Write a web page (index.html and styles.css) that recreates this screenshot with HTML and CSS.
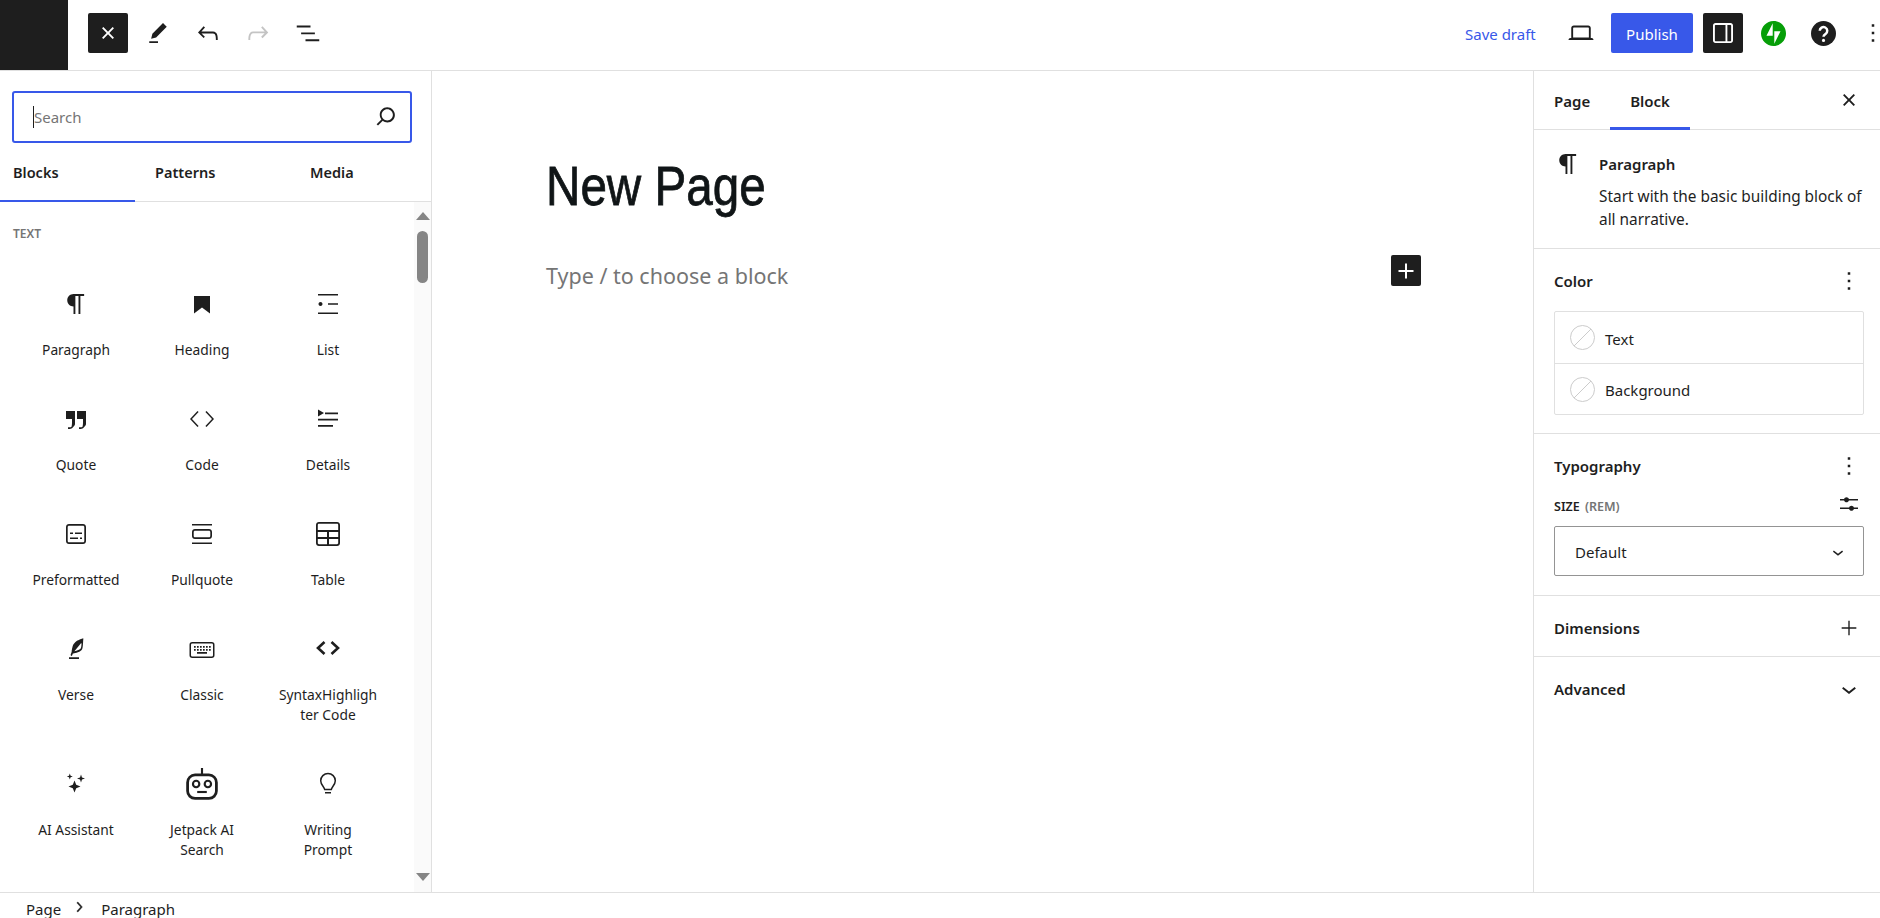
FILE: index.html
```html
<!DOCTYPE html>
<html lang="en">
<head>
    <meta charset="UTF-8">
    <title>Add New Page</title>
    <link rel="stylesheet" href="styles.css">
</head>
<body>
<div class="app">

    <!-- top toolbar -->
    <header class="topbar">
        <div class="logo-box"></div>
        <button class="icon-btn dark">
            <svg viewBox="0 0 24 24" width="30" height="30"><path d="M12 13.06l3.712 3.713 1.061-1.06L13.061 12l3.712-3.712-1.06-1.06L12 10.938 8.288 7.227l-1.061 1.06L10.939 12l-3.712 3.712 1.06 1.061L12 13.061z"/></svg>
        </button>
        <button class="tool-btn first-tool"><svg viewBox="0 0 24 24" width="30" height="30"><path d="m19 7-3-3-8.5 8.5-1 4 4-1L19 7Zm-7 11.5H5V20h7v-1.5Z"/></svg></button>
        <button class="tool-btn"><svg viewBox="0 0 24 24" width="30" height="30"><path d="M18.3 11.7c-.6-.6-1.4-.9-2.3-.9H6.7l2.9-3.3-1.1-1-4.5 5L8.5 16l1-1-2.7-2.7H16c.5 0 .9.2 1.3.5 1 1 1 3.4 1 4.5v.3h1.5v-.2c0-1.5 0-4.3-1.5-5.7z"/></svg></button>
        <button class="tool-btn disabled"><svg viewBox="0 0 24 24" width="30" height="30"><path d="M15.6 6.5l-1.1 1 2.9 3.3H8c-.9 0-1.7.3-2.3.9-1.4 1.5-1.4 4.2-1.4 5.6v.2h1.5v-.3c0-1.1 0-3.5 1-4.5.3-.3.7-.5 1.3-.5h9.2L14.5 15l1.1 1.1 4.6-4.6-4.6-5z"/></svg></button>
        <button class="tool-btn"><svg viewBox="0 0 24 24" width="30" height="30"><path d="M3 6h11v1.5H3V6Zm3.5 5.5h11V13h-11v-1.5ZM21 17H10v1.5h11V17Z"/></svg></button>

        <div class="topbar-right">
            <a class="save-draft">Save draft</a>
            <button class="icon-btn laptop"><svg viewBox="0 0 24 24" width="30" height="30"><path d="M20.5 16h-.7V8c0-1.1-.9-2-2-2H6.2c-1.1 0-2 .9-2 2v8h-.7c-.8 0-1.5.7-1.5 1.5h20c0-.8-.7-1.5-1.5-1.5zM5.7 8c0-.3.2-.5.5-.5h11.6c.3 0 .5.2.5.5v7.6H5.7V8z"/></svg></button>
            <button class="publish">Publish</button>
            <button class="icon-btn dark"><svg viewBox="0 0 24 24" width="30" height="30"><path d="M18 4H6c-1.1 0-2 .9-2 2v12c0 1.1.9 2 2 2h12c1.1 0 2-.9 2-2V6c0-1.1-.9-2-2-2zm-4 14.5H6c-.3 0-.5-.2-.5-.5V6c0-.3.2-.5.5-.5h8v13zm4.5-.5c0 .3-.2.5-.5.5h-2.500v-13H18c.3 0 .5.2.5.5v12z"/></svg></button>
            <button class="tool-btn"><svg viewBox="0 0 32 32" width="25" height="25"><path fill="#069e08" d="M16 0C7.2 0 0 7.2 0 16s7.2 16 16 16 16-7.2 16-16S24.8 0 16 0zm-1 19H7l8-16v16zm2 10V13h8l-8 16z"/></svg></button>
            <button class="tool-btn"><svg viewBox="0 0 24 24" width="25" height="25"><circle cx="12" cy="12" r="12"/><path d="M8.4 9.4a3.6 3.6 0 1 1 5.6 3c-1.2.8-2 1.3-2 2.8" fill="none" stroke="#fff" stroke-width="2.4"/><circle cx="12" cy="18.6" r="1.5" fill="#fff"/></svg></button>
            <button class="kebab-top"><svg viewBox="6.4 0 11.2 24" width="14" height="30"><path d="M13 19h-2v-2h2v2zm0-6h-2v-2h2v2zm0-6h-2V5h2v2z"/></svg></button>
        </div>
    </header>

    <div class="main">

        <!-- block inserter -->
        <aside class="inserter">
            <div class="search-wrap">
                <div class="search-box">
                    <span class="caret"></span>
                    <span class="placeholder">Search</span>
                    <svg viewBox="0 0 24 24" width="30" height="30"><path d="M13 5c-3.3 0-6 2.7-6 6 0 1.4.5 2.7 1.3 3.7l-3.8 3.8 1.1 1.1 3.8-3.8c1 .8 2.3 1.3 3.7 1.3 3.3 0 6-2.7 6-6S16.3 5 13 5zm0 10.5c-2.5 0-4.5-2-4.5-4.5s2-4.5 4.5-4.5 4.5 2 4.5 4.5-2 4.5-4.5 4.5z"/></svg>
                </div>
            </div>
            <div class="ins-tabs">
                <div class="ins-tab active">Blocks</div>
                <div class="ins-tab patterns">Patterns</div>
                <div class="ins-tab media">Media</div>
            </div>
            <div class="ins-body">
                <div class="ins-list">
                    <div class="cat-title">TEXT</div>
                    <div class="block-grid">
                        <div class="block-item">
                            <svg viewBox="2.4 2.4 19.2 19.2" width="24" height="24"><path d="m9.996 14v-.225l.004 0v6.225h1.5v-14.5h2.5v14.5h1.5v-14.5h3v-1.5h-8.504c-2.761 0-5 2.239-5 5 0 2.761 2.239 5 5 5z"/></svg>
                            <span>Paragraph</span>
                        </div>
                        <div class="block-item">
                            <svg viewBox="0 0 24 24" width="24" height="24"><path d="M4 4h16v17.5l-8-6-8 6z"/></svg>
                            <span>Heading</span>
                        </div>
                        <div class="block-item">
                            <svg viewBox="0 0 24 24" width="24" height="24"><path d="M2 2v1.5h20V2H2zm10 10.75h10v-1.5H12v1.5zM2 22h20v-1.5H2V22zm4.5-10c0-1.1-.9-2-2-2s-2 .9-2 2 .9 2 2 2 2-.9 2-2z"/></svg>
                            <span>List</span>
                        </div>
                        <div class="block-item">
                            <svg viewBox="0 0 24 24" width="24" height="24"><path d="M13 4v8h6v4c0 .8-.2 3.4-.5 3.7-.6.6-1.6.6-2.5.5h-1v1.8h1c1 0 2.3-.1 3.3-1 .6-.6 2.7-2.6 2.7-3.8V4h-9zM2 4v8h6v4c0 .8-.2 3.4-.5 3.7-.6.6-1.6.6-2.5.5H4v1.8h1c1 0 2.3-.1 3.3-1 .6-.6 2.7-2.6 2.7-3.8V4H2z"/></svg>
                            <span>Quote</span>
                        </div>
                        <div class="block-item">
                            <svg viewBox="0 0 24 24" width="24" height="24"><path d="M16.5 4l-1.1 1.1L22 12l-6.6 6.9 1.1 1.1 7.5-8zM7.500 4l1.100 1.100L2 12l6.600 6.900-1.100 1.100L0 12z"/></svg>
                            <span>Code</span>
                        </div>
                        <div class="block-item">
                            <svg viewBox="0 0 24 24" width="24" height="24"><path d="M2 18h15v1.800H2V18zm0-6.200h20v1.800H2v-1.800zM9 5.500h13v1.800H9V5.500z"/><path d="M2 2.500v7l6-3.500z"/></svg>
                            <span>Details</span>
                        </div>
                        <div class="block-item">
                            <svg viewBox="0 0 24 24" width="24" height="24"><path d="M19 2H5C3.3 2 2 3.3 2 5v14c0 1.7 1.3 3 3 3h14c1.7 0 3-1.3 3-3V5c0-1.7-1.3-3-3-3zm1.3 17c0 .7-.6 1.3-1.3 1.3H5c-.7 0-1.3-.6-1.3-1.3V5c0-.7.6-1.3 1.3-1.3h14c.7 0 1.3.6 1.3 1.3v14zM6 17h8v-1.5H6V17zm5-5h7v-1.5h-7V12zm-2-1.5H6V12h3v-1.5zm7 6.5h2v-1.5h-2V17z"/></svg>
                            <span>Preformatted</span>
                        </div>
                        <div class="block-item">
                            <svg viewBox="0 0 24 24" width="24" height="24"><path d="M19 7H5C3.3 7 2 8.3 2 10v4c0 1.7 1.3 3 3 3h14c1.7 0 3-1.3 3-3v-4c0-1.7-1.3-3-3-3zm1.3 7c0 .7-.6 1.3-1.3 1.3H5c-.7 0-1.3-.6-1.3-1.3v-4c0-.7.6-1.3 1.3-1.3h14c.7 0 1.3.6 1.3 1.3v4zM2 2v1.5h20V2H2zm0 20h20v-1.5H2V22z"/></svg>
                            <span>Pullquote</span>
                        </div>
                        <div class="block-item">
                            <svg viewBox="0 0 24 24" width="24" height="24"><path d="M21 0H3C1.3 0 0 1.3 0 3v18c0 1.7 1.3 3 3 3h18c1.7 0 3-1.3 3-3V3c0-1.7-1.3-3-3-3zM3 1.8h18c.7 0 1.2.5 1.2 1.2v5H1.800V3c0-.7.5-1.200 1.200-1.200zM13 10h9.200v5H13v-5zm-2 5H1.800v-5H11v5zM1.800 21v-4H11v5.200H3c-.7 0-1.200-.5-1.200-1.200zM21 22.200h-8V17h9.200v4c0 .7-.5 1.200-1.200 1.200z"/></svg>
                            <span>Table</span>
                        </div>
                        <div class="block-item">
                            <svg viewBox="0 0 24 24" width="24" height="24"><path d="M19.5 1l-1 .4c-.1 0-4 1.3-5.800 2.600C10.800 5.400 10 6.600 9.500 7.300c-.7 1.100-1.800 5.600-1.800 7.500l-1 2.800c-.2.5 0 .9.4 1.200.1 0 .2.1.3.1.3 0 .7-.2.8-.6l.7-1.800c.3 0 .8-.1 1.300-.2.8-.1 1.500-.4 2.400-.6.9-.2 1.800-.6 2.700-1 .8-.4 1.500-.8 2.100-1.400.6-.6.9-1.400 1.100-2.300.2-.8.3-1.900.4-2.900.1-1 .1-2 .2-3 0-1 .1-1.800.2-2.500V1zm-2 6.600c-.1 1-.2 1.800-.3 2.500-.2.7-.4 1.200-.7 1.600-.3.4-.9.7-1.600 1.100-.8.4-1.600.6-2.500 1-.7.2-1.400.4-2 .5l6.800-8.200c.1.5.4.5.3 1.500zM5 22h10v-1.700H5V22z"/></svg>
                            <span>Verse</span>
                        </div>
                        <div class="block-item">
                            <svg viewBox="0 0 26 24" width="26" height="24" class="down1"><rect x="1.25" y="4.75" width="23.5" height="14.5" rx="2" fill="none" stroke="#1e1e1e" stroke-width="1.5"/><path d="M5 8h1.7v1.7H5zM8 8h1.7v1.7H8zM11 8h1.7v1.7H11zM14 8h1.7v1.7H14zM17 8h1.7v1.7H17zM20 8h1.7v1.7H20zM5 11h1.7v1.7H5zM8 11h1.7v1.7H8zM11 11h1.7v1.7H11zM14 11h1.7v1.7H14zM17 11h1.7v1.7H17zM20 11h1.7v1.7H20zM8 14h10v1.7H8z"/></svg>
                            <span>Classic</span>
                        </div>
                        <div class="block-item">
                            <svg viewBox="0 0 24 24" width="24" height="24" class="up1"><path d="M8.5 6L2 12l6.5 6M15.5 6l6.5 6-6.5 6" fill="none" stroke="#1e1e1e" stroke-width="2.6"/></svg>
                            <span>SyntaxHighligh<br>ter Code</span>
                        </div>
                        <div class="block-item">
                            <svg viewBox="0 0 24 24" width="24" height="24"><path d="M9.5 8.5l1.7 4.3 4.3 1.7-4.3 1.7-1.7 4.3-1.7-4.3-4.3-1.7 4.3-1.7zM16 2.5l1 3 3 1-3 1-1 3-1-3-3-1 3-1zM4.8 1.5l.8 2.2 2.2.8-2.2.8-.8 2.2L4 5.3l-2.2-.8L4 3.7z" transform="translate(1 0)"/></svg>
                            <span>AI Assistant</span>
                        </div>
                        <div class="block-item">
                            <svg viewBox="0 0 30 30" width="32" height="32" class="robot"><path d="M14 0h2v6h-2z"/><rect x="1.5" y="6.5" width="27" height="22" rx="7" fill="none" stroke="#1e1e1e" stroke-width="2.6"/><circle cx="9.5" cy="15" r="3" fill="none" stroke="#1e1e1e" stroke-width="2"/><circle cx="20.5" cy="15" r="3" fill="none" stroke="#1e1e1e" stroke-width="2"/><path d="M10.5 21.5h9v2h-9z"/></svg>
                            <span>Jetpack AI<br>Search</span>
                        </div>
                        <div class="block-item">
                            <svg viewBox="0 0 24 24" width="24" height="24"><path d="M12 1.5a7.3 7.3 0 0 0-7.3 7.3c0 2.6 1.4 4.5 2.6 6 .8 1 1.2 2 1.4 2.7h6.6c.2-.7.6-1.7 1.4-2.7 1.2-1.5 2.600-3.400 2.600-6A7.300 7.300 0 0 0 12 1.500z" fill="none" stroke="#1e1e1e" stroke-width="1.5"/><path d="M9 20h6v1.500H9z"/></svg>
                            <span>Writing<br>Prompt</span>
                        </div>
                    </div>
                </div>
                <div class="scrollbar">
                    <div class="arrow-up"></div>
                    <div class="thumb"></div>
                    <div class="arrow-down"></div>
                </div>
            </div>
        </aside>

        <!-- editor canvas -->
        <main class="canvas">
            <h1 class="post-title">New Page</h1>
            <div class="block-row">
                <p class="type-hint">Type / to choose a block</p>
                <button class="add-block"><svg viewBox="0 0 24 24" width="30" height="30"><path d="M18 11.2h-5.200V6h-1.600v5.200H6v1.600h5.200V18h1.600v-5.200H18z"/></svg></button>
            </div>
        </main>

        <!-- settings sidebar -->
        <aside class="sidebar">
            <div class="side-tabs">
                <div class="side-tab">Page</div>
                <div class="side-tab active">Block</div>
                <svg class="side-close" viewBox="0 0 24 24" width="30" height="30"><path d="M12 13.06l3.712 3.713 1.061-1.06L13.061 12l3.712-3.712-1.06-1.06L12 10.938 8.288 7.227l-1.061 1.06L10.939 12l-3.712 3.712 1.06 1.061L12 13.061z"/></svg>
            </div>
            <div class="block-card">
                <svg viewBox="0 0 24 24" width="30" height="30"><path d="m9.996 14v-.225l.004 0v6.225h1.5v-14.5h2.5v14.5h1.5v-14.5h3v-1.5h-8.504c-2.761 0-5 2.239-5 5 0 2.761 2.239 5 5 5z"/></svg>
                <div>
                    <div class="card-title">Paragraph</div>
                    <div class="card-desc">Start with the basic building block of all narrative.</div>
                </div>
            </div>
            <section class="panel">
                <div class="panel-head">
                    <h2>Color</h2>
                    <svg viewBox="0 0 24 24" width="30" height="30"><path d="M13 19h-2v-2h2v2zm0-6h-2v-2h2v2zm0-6h-2V5h2v2z"/></svg>
                </div>
                <div class="color-box">
                    <div class="color-row"><span class="swatch"></span>Text</div>
                    <div class="color-row"><span class="swatch"></span>Background</div>
                </div>
            </section>
            <section class="panel">
                <div class="panel-head">
                    <h2>Typography</h2>
                    <svg viewBox="0 0 24 24" width="30" height="30"><path d="M13 19h-2v-2h2v2zm0-6h-2v-2h2v2zm0-6h-2V5h2v2z"/></svg>
                </div>
                <div class="size-row">
                    <span class="size-label">SIZE <em>(REM)</em></span>
                    <svg viewBox="0 0 24 24" width="24" height="24"><path d="M14.5 13.8c-1.1 0-2.1.7-2.4 1.8H3V17h9.1c.3 1 1.3 1.8 2.4 1.8s2.1-.7 2.4-1.8H21v-1.5h-4.1c-.3-1-1.3-1.7-2.4-1.7zM11.9 7c-.3-1-1.3-1.8-2.4-1.8S7.4 6 7.1 7H3v1.5h4.1c.3 1 1.3 1.8 2.4 1.8s2.1-.7 2.4-1.8H21V7h-9.100z"/></svg>
                </div>
                <div class="size-select">
                    <span>Default</span>
                    <svg viewBox="0 0 24 24" width="22" height="22"><path d="M17.5 11.6L12 16l-5.5-4.400.9-1.200L12 14l4.500-3.600 1 1.200z"/></svg>
                </div>
            </section>
            <section class="panel panel-flat">
                <div class="panel-head">
                    <h2>Dimensions</h2>
                    <svg class="plus" viewBox="0 0 24 24" width="22" height="22"><path d="M11.25 12.75V20h1.5v-7.25H20v-1.5h-7.25V4h-1.5v7.25H4v1.5h7.25z"/></svg>
                </div>
            </section>
            <section class="panel panel-flat no-border">
                <div class="panel-head">
                    <h2>Advanced</h2>
                    <svg viewBox="0 0 24 24" width="30" height="30"><path d="M17.5 11.6L12 16l-5.5-4.400.9-1.200L12 14l4.500-3.600 1 1.200z"/></svg>
                </div>
            </section>
        </aside>
    </div>

    <footer class="crumbs">
        <span>Page</span>
        <svg viewBox="0 0 24 24" width="20" height="20"><path d="M10.6 6L9.4 7l4.6 5-4.6 5 1.2 1 5.4-6z" stroke="#1e1e1e" stroke-width=".6"/></svg>
        <span>Paragraph</span>
    </footer>
</div>
</body>
</html>
```

FILE: styles.css
```css
* {
    box-sizing: border-box;
}
html, body {
    margin: 0;
    height: 100%;
    overflow: hidden;
}
body {
    font-family: "Noto Sans", "Open Sans", sans-serif;
    font-size: 15px;
    color: #1e1e1e;
    background: #fff;
}
svg {
    fill: #1e1e1e;
    display: block;
    flex-shrink: 0;
}
button {
    border: none;
    background: none;
    padding: 0;
    font: inherit;
    display: flex;
    align-items: center;
    justify-content: center;
}
.app {
    height: 918px;
    display: grid;
    grid-template-rows: 71px 1fr 26px;
}

/* top bar */
.topbar {
    display: flex;
    align-items: center;
    border-bottom: 1px solid #e0e0e0;
    padding-bottom: 4px;
}
.logo-box {
    width: 68px;
    height: 70px;
    background: #1e1e1e;
    margin-right: 20px;
    align-self: flex-start;
}
.icon-btn {
    width: 40px;
    height: 40px;
    border-radius: 2px;
}
.icon-btn.dark {
    background: #1e1e1e;
}
.icon-btn.dark svg {
    fill: #fff;
}
.tool-btn {
    width: 50px;
    height: 40px;
}
.first-tool {
    margin-left: 4px;
}
.tool-btn.disabled svg {
    fill: #c4c4c4;
}
.topbar-right {
    margin-left: auto;
    display: flex;
    align-items: center;
}
.save-draft {
    color: #3858e9;
    width: 71px;
    white-space: nowrap;
    margin-right: 25px;
    padding-top: 2px;
}
.laptop {
    margin-right: 10px;
}
.publish {
    width: 82px;
    height: 40px;
    padding-top: 2px;
    background: #3858e9;
    color: #fff;
    border-radius: 2px;
    margin-right: 10px;
}
.icon-btn.dark + .tool-btn {
    margin-left: 5px;
}
.kebab-top {
    width: 14px;
    margin-left: 18px;
}

.main {
    display: grid;
    grid-template-columns: 432px 1fr 347px;
    min-height: 0;
}

/* inserter */
.inserter {
    border-right: 1px solid #e0e0e0;
    display: flex;
    flex-direction: column;
    min-height: 0;
}
.search-wrap {
    padding: 20px 19px 0 12px;
}
.search-box {
    height: 52px;
    border: 2px solid #3858e9;
    border-radius: 3px;
    display: flex;
    align-items: center;
    padding: 0 9px 0 19px;
}
.search-box svg {
    margin-top: -2px;
}
.caret {
    width: 1px;
    height: 22px;
    background: #1e1e1e;
}
.placeholder {
    color: #757575;
    flex: 1;
}
.ins-tabs {
    display: flex;
    height: 58px;
    border-bottom: 1px solid #e0e0e0;
    margin-top: 1px;
}
.ins-tab {
    width: 135px;
    line-height: 56px;
    font-weight: 600;
    font-size: 14.5px;
    padding-left: 13px;
    margin-bottom: -1px;
}
.ins-tab.patterns {
    padding-left: 20px;
}
.ins-tab.media {
    padding-left: 40px;
}
.ins-tab.active {
    border-bottom: 2px solid #3858e9;
}
.ins-body {
    flex: 1;
    min-height: 0;
    display: flex;
}
.ins-list {
    flex: 1;
    overflow: hidden;
    padding-left: 13px;
}
.cat-title {
    font-size: 12px;
    font-weight: 600;
    line-height: 16px;
    color: #757575;
    margin-top: 24px;
    margin-bottom: 26px;
}
.block-grid {
    display: grid;
    grid-template-columns: repeat(3, 126px);
}
.block-item {
    padding: 24px 0 23px;
    display: flex;
    flex-direction: column;
    align-items: center;
    text-align: center;
    line-height: 20px;
    font-size: 13.8px;
}
.block-item svg {
    margin-bottom: 24px;
}
.block-item svg.up1 {
    transform: translateY(-1px);
}
.block-item svg.down1 {
    transform: translateY(1px);
}
.block-item svg.robot {
    margin-top: -4px;
    margin-bottom: 20px;
}
.scrollbar {
    width: 17px;
    background: #fafafa;
    display: flex;
    flex-direction: column;
    align-items: center;
}
.arrow-up {
    width: 0;
    height: 0;
    border: 7px solid transparent;
    border-top: none;
    border-bottom: 8px solid #858585;
    margin-top: 10px;
}
.thumb {
    width: 11px;
    height: 52px;
    border-radius: 6px;
    background: #858585;
    margin-top: 11px;
}
.arrow-down {
    width: 0;
    height: 0;
    border: 7px solid transparent;
    border-bottom: none;
    border-top: 8px solid #858585;
    margin-top: auto;
    margin-bottom: 11px;
}

/* canvas */
.canvas {
    padding: 81px 0 0 114px;
}
.post-title {
    margin: 0;
    font-family: "Liberation Sans", sans-serif;
    font-weight: 400;
    font-size: 56px;
    line-height: 68px;
    color: #101517;
    -webkit-text-stroke: 0.8px #101517;
    transform: scaleX(0.85);
    transform-origin: left;
}
.block-row {
    display: flex;
    align-items: center;
    justify-content: space-between;
    width: 875px;
    margin-top: 31px;
}
.type-hint {
    margin: 0;
    padding-top: 10px;
    font-size: 21.5px;
    color: #757575;
}
.add-block {
    width: 30px;
    height: 31px;
    background: #1e1e1e;
    border-radius: 2px;
}
.add-block svg {
    fill: #fff;
}

/* sidebar */
.sidebar {
    border-left: 1px solid #e0e0e0;
}
.side-tabs {
    height: 59px;
    display: flex;
    border-bottom: 1px solid #e0e0e0;
    align-items: stretch;
}
.side-tab {
    width: 76px;
    padding-left: 20px;
    line-height: 60px;
    font-weight: 600;
    margin-bottom: -1px;
}
.side-tab.active {
    width: 80px;
    padding: 0;
    text-align: center;
    border-bottom: 3px solid #3858e9;
}
.side-close {
    margin: 14px 16px 0 auto;
}
.block-card {
    display: flex;
    gap: 16px;
    padding: 19px 16px 17px 19px;
    border-bottom: 1px solid #e0e0e0;
}
.card-title {
    font-weight: 600;
    line-height: 20px;
    margin-top: 5px;
    margin-bottom: 11px;
}
.card-desc {
    line-height: 23px;
    font-size: 15.4px;
}
.panel {
    padding: 22px 16px 18px 20px;
    border-bottom: 1px solid #e0e0e0;
}
.panel + .panel {
    padding-bottom: 19px;
}
.panel.panel-flat {
    padding-bottom: 18px;
}
.panel.no-border {
    border-bottom: none;
}
.panel-head {
    display: flex;
    justify-content: space-between;
    align-items: center;
    height: 20px;
}
.panel-head h2 {
    margin: 0;
    font-size: 15px;
    font-weight: 600;
}
.panel-head svg.plus {
    margin-right: 4px;
}
.color-box {
    margin-top: 20px;
    border: 1px solid #e0e0e0;
    border-radius: 2px;
}
.color-row {
    height: 51px;
    display: flex;
    align-items: center;
    padding-left: 15px;
    padding-top: 2px;
    gap: 10px;
}
.color-row + .color-row {
    border-top: 1px solid #e0e0e0;
}
.swatch {
    width: 25px;
    height: 25px;
    margin-top: -2px;
    border-radius: 50%;
    border: 1px solid #ccc;
    background: linear-gradient(135deg, transparent 49%, #ccc 49%, #ccc 51%, transparent 51%);
}
.size-row {
    display: flex;
    justify-content: space-between;
    align-items: center;
    height: 16px;
    margin-top: 22px;
}
.size-row svg {
    margin-right: 3px;
    margin-top: -4px;
}
.size-label {
    font-size: 12.5px;
    font-weight: 600;
}
.size-label em {
    font-style: normal;
    color: #757575;
    margin-left: 2px;
}
.size-select {
    height: 50px;
    margin-top: 12px;
    border: 1px solid #949494;
    border-radius: 2px;
    display: flex;
    align-items: center;
    justify-content: space-between;
    padding: 2px 14px 0 20px;
}

/* breadcrumbs */
.crumbs {
    border-top: 1px solid #e0e0e0;
    display: flex;
    align-items: center;
    padding: 7px 0 0 26px;
}
.crumbs svg {
    margin: -5px 12px 0 8px;
}
```
